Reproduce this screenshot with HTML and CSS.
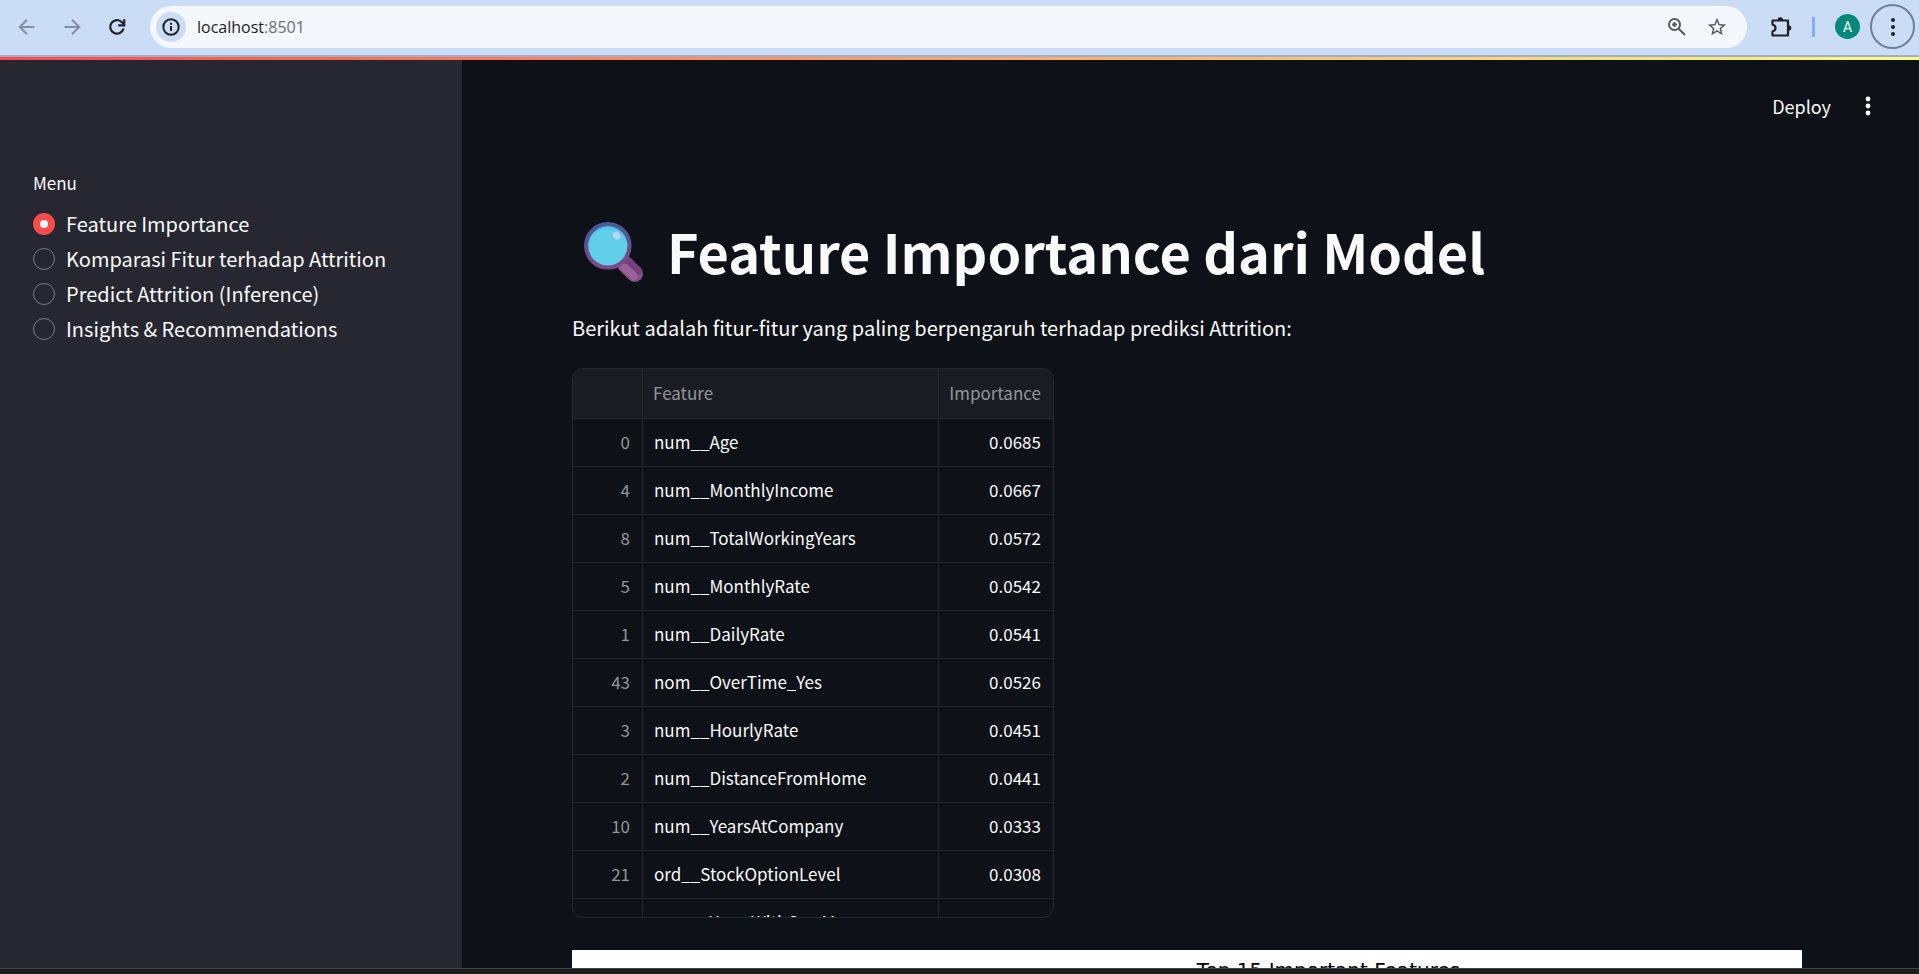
FILE: index.html
```html
<!DOCTYPE html>
<html lang="id">
<head>
<meta charset="utf-8">
<title>Feature Importance</title>
<link rel="stylesheet" href="styles.css">
</head>
<body>
<header class="browser">
  <nav class="nav-buttons">
    <button class="icon-btn muted" aria-label="Back"><svg width="24" height="24" viewBox="0 0 24 24" fill="none" stroke="currentColor" stroke-width="2"><path d="M19.500 12H5.500M12 4.800L4.800 12L12 19.200"/></svg></button>
    <button class="icon-btn muted" aria-label="Forward"><svg width="24" height="24" viewBox="0 0 24 24" fill="none" stroke="currentColor" stroke-width="2"><path d="M4.500 12H18.500M12 4.800L19.200 12L12 19.200"/></svg></button>
    <button class="icon-btn" aria-label="Reload"><svg width="24" height="24" viewBox="0 0 24 24" fill="none" stroke="currentColor" stroke-width="2.200"><path d="M18.600 13.500A6.800 6.800 0 1 1 17 7.200L19 9.300"/><path d="M19.200 4.200V10.300H13.200"/></svg></button>
  </nav>
  <div class="omnibox">
    <button class="site-info" aria-label="Site information"><svg width="20" height="20" viewBox="0 0 20 20" fill="none" stroke="currentColor" stroke-width="2"><circle cx="10" cy="10" r="7.700"/><path d="M10 9V14M10 5.800V7.800"/></svg></button>
    <span class="url">localhost<span class="port">:8501</span></span>
    <button class="icon-btn tool" aria-label="Zoom"><svg width="22" height="22" viewBox="0 0 22 22" fill="none" stroke="currentColor" stroke-width="2"><circle cx="8.500" cy="8.500" r="5.500"/><path d="M12.700 12.700L19 19M8.500 6V11M6 8.500H11"/></svg></button>
    <button class="icon-btn tool" aria-label="Bookmark"><svg width="22" height="22" viewBox="0 0 24 24" fill="currentColor"><path d="M22 9.240l-7.190-.62L12 2 9.190 8.630 2 9.240l5.460 4.730L5.820 21 12 17.270 18.180 21l-1.630-7.030L22 9.240zM12 15.400l-3.760 2.270 1-4.280-3.320-2.880 4.380-.38L12 6.100l1.710 4.040 4.380.38-3.320 2.880 1 4.280L12 15.400z"/></svg></button>
  </div>
  <div class="browser-tools">
    <button class="icon-btn" aria-label="Extensions"><svg width="24" height="24" viewBox="0 0 24 24"><path d="M3.500 5.500H19V20.500H3.500V16.500Q6.500 15.500 6.500 13Q6.500 10.500 3.500 9.500Z" fill="none" stroke="currentColor" stroke-width="2.200" stroke-linejoin="round"/><path d="M8.500 5a2.800 2.800 0 0 1 5.600 0zM19.500 10.200a2.800 2.800 0 0 1 0 5.600z" fill="currentColor"/></svg></button>
    <span class="divider"></span>
    <button class="avatar" aria-label="Profile">A</button>
    <button class="menu-ring" aria-label="Browser menu"><svg width="6" height="20" viewBox="0 0 6 20" fill="currentColor"><circle cx="3" cy="3" r="2"/><circle cx="3" cy="10" r="2"/><circle cx="3" cy="17" r="2"/></svg></button>
  </div>
</header>
<div class="decoration"></div>
<div class="app">
  <aside class="sidebar">
    <fieldset class="menu">
      <legend>Menu</legend>
      <label><input type="radio" name="menu" checked><span>Feature Importance</span></label>
      <label><input type="radio" name="menu"><span>Komparasi Fitur terhadap Attrition</span></label>
      <label><input type="radio" name="menu"><span>Predict Attrition (Inference)</span></label>
      <label><input type="radio" name="menu"><span>Insights &amp; Recommendations</span></label>
    </fieldset>
  </aside>
  <main class="main">
    <div class="toolbar">
      <button class="deploy">Deploy</button>
      <button class="more" aria-label="Main menu"><svg width="6" height="20" viewBox="0 0 6 20" fill="currentColor"><circle cx="3" cy="3" r="2.400"/><circle cx="3" cy="10" r="2.400"/><circle cx="3" cy="17" r="2.400"/></svg></button>
    </div>
    <div class="content">
      <h1>
        <svg class="glass" width="62" height="62" viewBox="0 0 60 60" aria-hidden="true">
          <defs>
            <linearGradient id="rim" x1="0" y1="0" x2="0" y2="1"><stop offset="0" stop-color="#455b98"/><stop offset="1" stop-color="#7d4a85"/></linearGradient>
            <radialGradient id="lens" cx=".5" cy=".6" r=".6"><stop offset=".75" stop-color="#62cfea"/><stop offset="1" stop-color="#48b4f0"/></radialGradient>
          </defs>
          <path d="M42 43L51 52" stroke="#86508a" stroke-width="16" stroke-linecap="round" fill="none"/>
          <path d="M45 41L54 49" stroke="#743f7c" stroke-width="8" stroke-linecap="round" fill="none"/>
          <path d="M41 46L50 54" stroke="#9a6098" stroke-width="8" stroke-linecap="round" fill="none"/>
          <circle cx="25" cy="25" r="21" fill="url(#lens)" stroke="url(#rim)" stroke-width="4"/>
          <ellipse cx="33.500" cy="15" rx="3.300" ry="4.200" fill="#b9d3f2" transform="rotate(-35 33.500 15)"/>
        </svg>
        <span>Feature Importance dari Model</span>
      </h1>
      <p>Berikut adalah fitur-fitur yang paling berpengaruh terhadap prediksi Attrition:</p>
      <div class="frame">
        <table>
          <colgroup><col class="c-index"><col class="c-feature"><col class="c-value"></colgroup>
          <thead><tr><th></th><th class="name">Feature</th><th>Importance</th></tr></thead>
          <tbody>
            <tr><th>0</th><td class="name">num__Age</td><td>0.0685</td></tr>
            <tr><th>4</th><td class="name">num__MonthlyIncome</td><td>0.0667</td></tr>
            <tr><th>8</th><td class="name">num__TotalWorkingYears</td><td>0.0572</td></tr>
            <tr><th>5</th><td class="name">num__MonthlyRate</td><td>0.0542</td></tr>
            <tr><th>1</th><td class="name">num__DailyRate</td><td>0.0541</td></tr>
            <tr><th>43</th><td class="name">nom__OverTime_Yes</td><td>0.0526</td></tr>
            <tr><th>3</th><td class="name">num__HourlyRate</td><td>0.0451</td></tr>
            <tr><th>2</th><td class="name">num__DistanceFromHome</td><td>0.0441</td></tr>
            <tr><th>10</th><td class="name">num__YearsAtCompany</td><td>0.0333</td></tr>
            <tr><th>21</th><td class="name">ord__StockOptionLevel</td><td>0.0308</td></tr>
            <tr><th>9</th><td class="name">num__YearsWithCurrManager</td><td>0.0303</td></tr>
          </tbody>
        </table>
      </div>
      <figure class="chart"><figcaption>Top 15 Important Features</figcaption></figure>
    </div>
  </main>
</div>
<footer class="taskbar"></footer>
</body>
</html>
```
FILE: styles.css
```css
* { box-sizing: border-box; }
body {
  margin: 0;
  height: 100vh;
  display: flex;
  flex-direction: column;
  overflow: hidden;
  background: #0e1117;
  color: #fafafa;
  font-family: "Noto Sans CJK JP", "Noto Sans", sans-serif;
  font-size: 20px;
}
button {
  border: 0;
  padding: 0;
  background: none;
  color: inherit;
  font: inherit;
  display: flex;
  align-items: center;
  justify-content: center;
}
.browser {
  flex: none;
  height: 57px;
  display: flex;
  align-items: center;
  padding: 0 4px 2px 15px;
  background: #cbdcf6;
  border-bottom: 2px solid #9fb0cf;
  color: #1f2124;
}
.nav-buttons { display: flex; gap: 21px; margin-right: 21px; }
.icon-btn { width: 24px; height: 24px; }
.muted { color: #838fa3; }
.omnibox {
  flex: 1;
  height: 42px;
  display: flex;
  align-items: center;
  gap: 16px;
  padding: 0 18px 0 6px;
  border-radius: 21px;
  background: #f4f7fc;
}
.site-info { width: 30px; height: 30px; border-radius: 50%; background: #cbdcf6; }
.url { flex: 1; margin-left: -5px; font-family: "Open Sans", sans-serif; font-size: 16px; }
.port { color: #6b6f75; }
.tool { color: #55585c; }
.browser-tools { display: flex; align-items: center; margin-left: 22px; }
.divider { width: 3px; height: 20px; margin: 0 20px 0 19px; background: #84acee; }
.avatar { width: 25px; height: 25px; margin-right: 10px; border-radius: 50%; background: #00897b; color: #fff; font: 14px Roboto, sans-serif; }
.menu-ring { width: 45px; height: 45px; border: 2px solid #6d7ea3; border-radius: 50%; }
.decoration { flex: none; height: 3px; background: linear-gradient(90deg, #ff4b4b, #fffd80); }
.app { flex: 1; min-height: 0; display: flex; }
.sidebar { flex: none; width: 462px; padding: 107px 33px 0; background: #262730; }
.menu { margin: 0; padding: 0; border: 0; }
.menu legend { padding: 0; margin-bottom: 8px; font-size: 17px; line-height: 31px; }
.menu label { display: flex; align-items: center; gap: 11px; height: 35px; }
.menu input {
  appearance: none;
  flex: none;
  width: 22px;
  height: 22px;
  margin: 0;
  border: 1px solid #7c7d83;
  border-radius: 50%;
}
.menu input:checked { border: 7px solid #ff4b4b; background: #fafafa; }
.main { flex: 1; min-width: 0; overflow: hidden; }
.toolbar { display: flex; justify-content: flex-end; align-items: center; gap: 34px; height: 91px; padding-right: 48px; font-size: 18px; }
.content { padding: 66px 117px 0 110px; }
h1 { display: flex; align-items: center; gap: 23px; margin: 0; padding-left: 10px; height: 68px; font-size: 54px; font-weight: 700; line-height: 68px; }
p { margin: 26px 0 24px; height: 33px; line-height: 33px; }
.frame { width: 482px; height: 550px; overflow: hidden; border: 1px solid #262830; border-radius: 11px; }
table { width: 100%; border-collapse: separate; border-spacing: 0; table-layout: fixed; font-size: 17px; line-height: 24px; }
.c-index { width: 70px; }
.c-value { width: 114px; }
th, td { height: 48px; padding: 0 12px 2px 11px; border-bottom: 1px solid #262830; border-right: 1px solid #262830; text-align: right; font-weight: 400; }
th { color: #94969a; }
thead th { height: 50px; padding-left: 10px; background: #1a1c23; }
tr > :last-child { border-right: 0; }
th.name, td.name { text-align: left; }
.chart { margin: 32px 0 0; height: 600px; background: #fff; color: #000; text-align: center; padding: 8px 0 0 23%; font: 20px "DejaVu Sans", sans-serif; }
.taskbar { flex: none; height: 6px; border-top: 1px solid #444; background: #1c1c1c; }
```
